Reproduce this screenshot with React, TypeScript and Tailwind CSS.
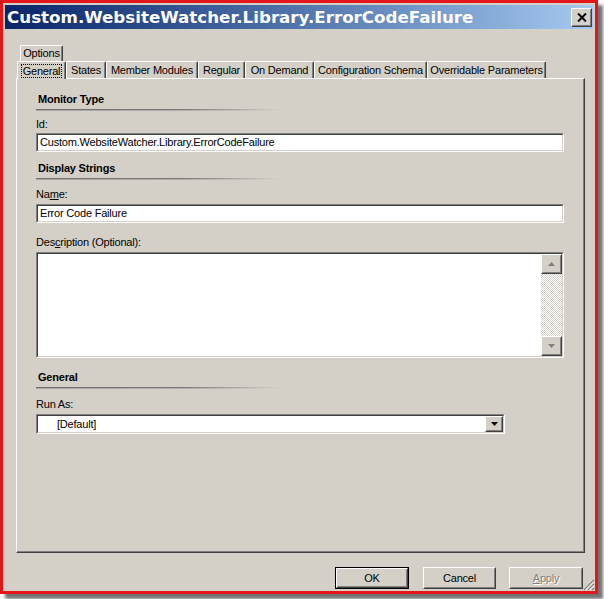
import type { ReactNode } from "react";

const body =
  "font-['Liberation_Sans',Arial,sans-serif] text-[11px] leading-[13px] tracking-[-0.2px] text-black";

function Sunken({ className, children }: { className?: string; children?: ReactNode }) {
  return (
    <div
      className={`border border-t-[#808080] border-l-[#808080] border-b-white border-r-white ${className ?? ""}`}
    >
      <div className="flex h-full border border-t-[#404040] border-l-[#404040] border-b-[#d4d0c8] border-r-[#d4d0c8] bg-white">
        {children}
      </div>
    </div>
  );
}

function Raised({ className, children }: { className?: string; children?: ReactNode }) {
  return (
    <div
      className={`border border-t-white border-l-white border-b-[#404040] border-r-[#404040] bg-[#d4d0c8] ${className ?? ""}`}
    >
      <div className="flex h-full items-center justify-center border border-t-[#d4d0c8] border-l-[#d4d0c8] border-b-[#808080] border-r-[#808080]">
        {children}
      </div>
    </div>
  );
}

function Arrow({ up, color }: { up?: boolean; color: string }) {
  return (
    <svg width="7" height="4" viewBox="0 0 7 4">
      <polygon points={up ? "3.5,0 7,4 0,4" : "0,0 7,0 3.5,4"} fill={color} />
    </svg>
  );
}

function Heading({ title, className }: { title: string; className?: string }) {
  return (
    <div className={className}>
      <div className="h-[13px] pl-[2px] font-bold">{title}</div>
      <div className="mt-[3px] h-px w-[245px] bg-linear-to-r from-[#707070] via-[#7a7a7a] via-60% to-transparent" />
      <div className="h-px w-[245px] bg-linear-to-r from-[#a8a6a0] via-[#b0aea8] via-60% to-transparent" />
    </div>
  );
}

const tabs = [
  { label: "States", w: "w-[40px]" },
  { label: "Member Modules", w: "w-[92px]" },
  { label: "Regular", w: "w-[47px]" },
  { label: "On Demand", w: "w-[69px]" },
  { label: "Configuration Schema", w: "w-[113px]" },
  { label: "Overridable Parameters", w: "w-[119px]" },
];

const tabBase =
  "flex items-center justify-center rounded-t-[2px] border-l border-t border-white border-r border-r-[#404040] shadow-[inset_-1px_0_0_#808080] whitespace-nowrap";

export default function App() {
  return (
    <div className="h-[599px] w-[604px] bg-white">
      <div className="relative flex h-[594px] w-[598px] flex-col border-[3px] border-[#e3161b] bg-[#d4d0c8] p-[2px] shadow-[5px_5px_3px_rgba(0,0,0,0.55)]">
        <div className="flex h-[24px] shrink-0 items-center justify-between bg-linear-to-r from-[#0a246a] to-[#a6caf0] pl-[2px] pr-[1px]">
          <span className="font-['DejaVu_Sans',sans-serif] text-[16.7px] font-bold leading-none text-white">
            Custom.WebsiteWatcher.Library.ErrorCodeFailure
          </span>
          <Raised className="h-[19px] w-[21px]">
            <svg width="10" height="9" viewBox="0 0 10 9">
              <path d="M1 0.5 L9 8.5 M9 0.5 L1 8.5" stroke="black" strokeWidth="2" />
            </svg>
          </Raised>
        </div>

        <div className={`flex flex-1 flex-col pl-[11px] pr-[8px] pt-[16px] ${body}`}>
          <div className="flex h-[16px] pl-[4px]">
            <div className={`${tabBase} w-[43px]`}>Options</div>
          </div>
          <div className="relative z-10 flex h-[17px] items-end pl-[1px]">
            <div className={`${tabBase} mb-[-1px] h-[18px] w-[49px] bg-[#d4d0c8]`}>
              <span className="border border-dotted border-black px-[1px] leading-[12px]">General</span>
            </div>
            {tabs.map((t) => (
              <div key={t.label} className={`${tabBase} h-[17px] ${t.w}`}>
                {t.label}
              </div>
            ))}
          </div>

          <div className="flex flex-1 flex-col border-l border-t border-white border-r border-b border-r-[#404040] border-b-[#404040] pl-[19px] pt-[14px] shadow-[inset_-1px_-1px_0_#808080]">
            <Heading title="Monitor Type" />
            <div className="mt-[7px]">Id:</div>
            <Sunken className="mt-[2px] h-[19px] w-[528px]">
              <div className="flex items-center pl-[2px]">Custom.WebsiteWatcher.Library.ErrorCodeFailure</div>
            </Sunken>

            <Heading title="Display Strings" className="mt-[10px]" />
            <div className="mt-[8px]">
              Na<span className="underline">m</span>e:
            </div>
            <Sunken className="mt-[3px] h-[19px] w-[528px]">
              <div className="flex items-center pl-[2px]">Error Code Failure</div>
            </Sunken>

            <div className="mt-[13px]">
              Des<span className="underline">c</span>ription (Optional):
            </div>
            <Sunken className="mt-[3px] h-[106px] w-[528px]">
              <div className="flex-1" />
              <div className="flex w-[21px] flex-col">
                <Raised className="h-[20px]">
                  <Arrow up color="#808080" />
                </Raised>
                <div className="flex-1 bg-[repeating-conic-gradient(#d4d0c8_0%_25%,#ffffff_0%_50%)] bg-size-[2px_2px]" />
                <Raised className="h-[20px]">
                  <Arrow color="#808080" />
                </Raised>
              </div>
            </Sunken>

            <Heading title="General" className="mt-[13px]" />
            <div className="mt-[9px]">Run As:</div>
            <Sunken className="mt-[3px] h-[20px] w-[469px]">
              <div className="flex flex-1 items-center pl-[19px]">[Default]</div>
              <Raised className="h-full w-[18px]">
                <Arrow color="black" />
              </Raised>
            </Sunken>
          </div>

          <div className="mt-[14px] flex h-[22px] shrink-0 justify-end pr-[2px]">
            <div className="w-[74px] border border-black">
              <Raised className="h-full">OK</Raised>
            </div>
            <Raised className="ml-[14px] w-[73px]">Cancel</Raised>
            <Raised className="ml-[13px] w-[74px]">
              <span className="text-[#808080] [text-shadow:1px_1px_0_#ffffff]">
                <span className="underline">A</span>pply
              </span>
            </Raised>
          </div>
        </div>

        <svg className="absolute bottom-0 right-0" width="12" height="12" viewBox="0 0 12 12">
          <path d="M11 1 L1 11 M11 5 L5 11 M11 9 L9 11" stroke="#808080" strokeWidth="1.2" />
          <path d="M11 2.5 L2.5 11 M11 6.5 L6.5 11" stroke="#ffffff" strokeWidth="1" />
        </svg>
      </div>
    </div>
  );
}
